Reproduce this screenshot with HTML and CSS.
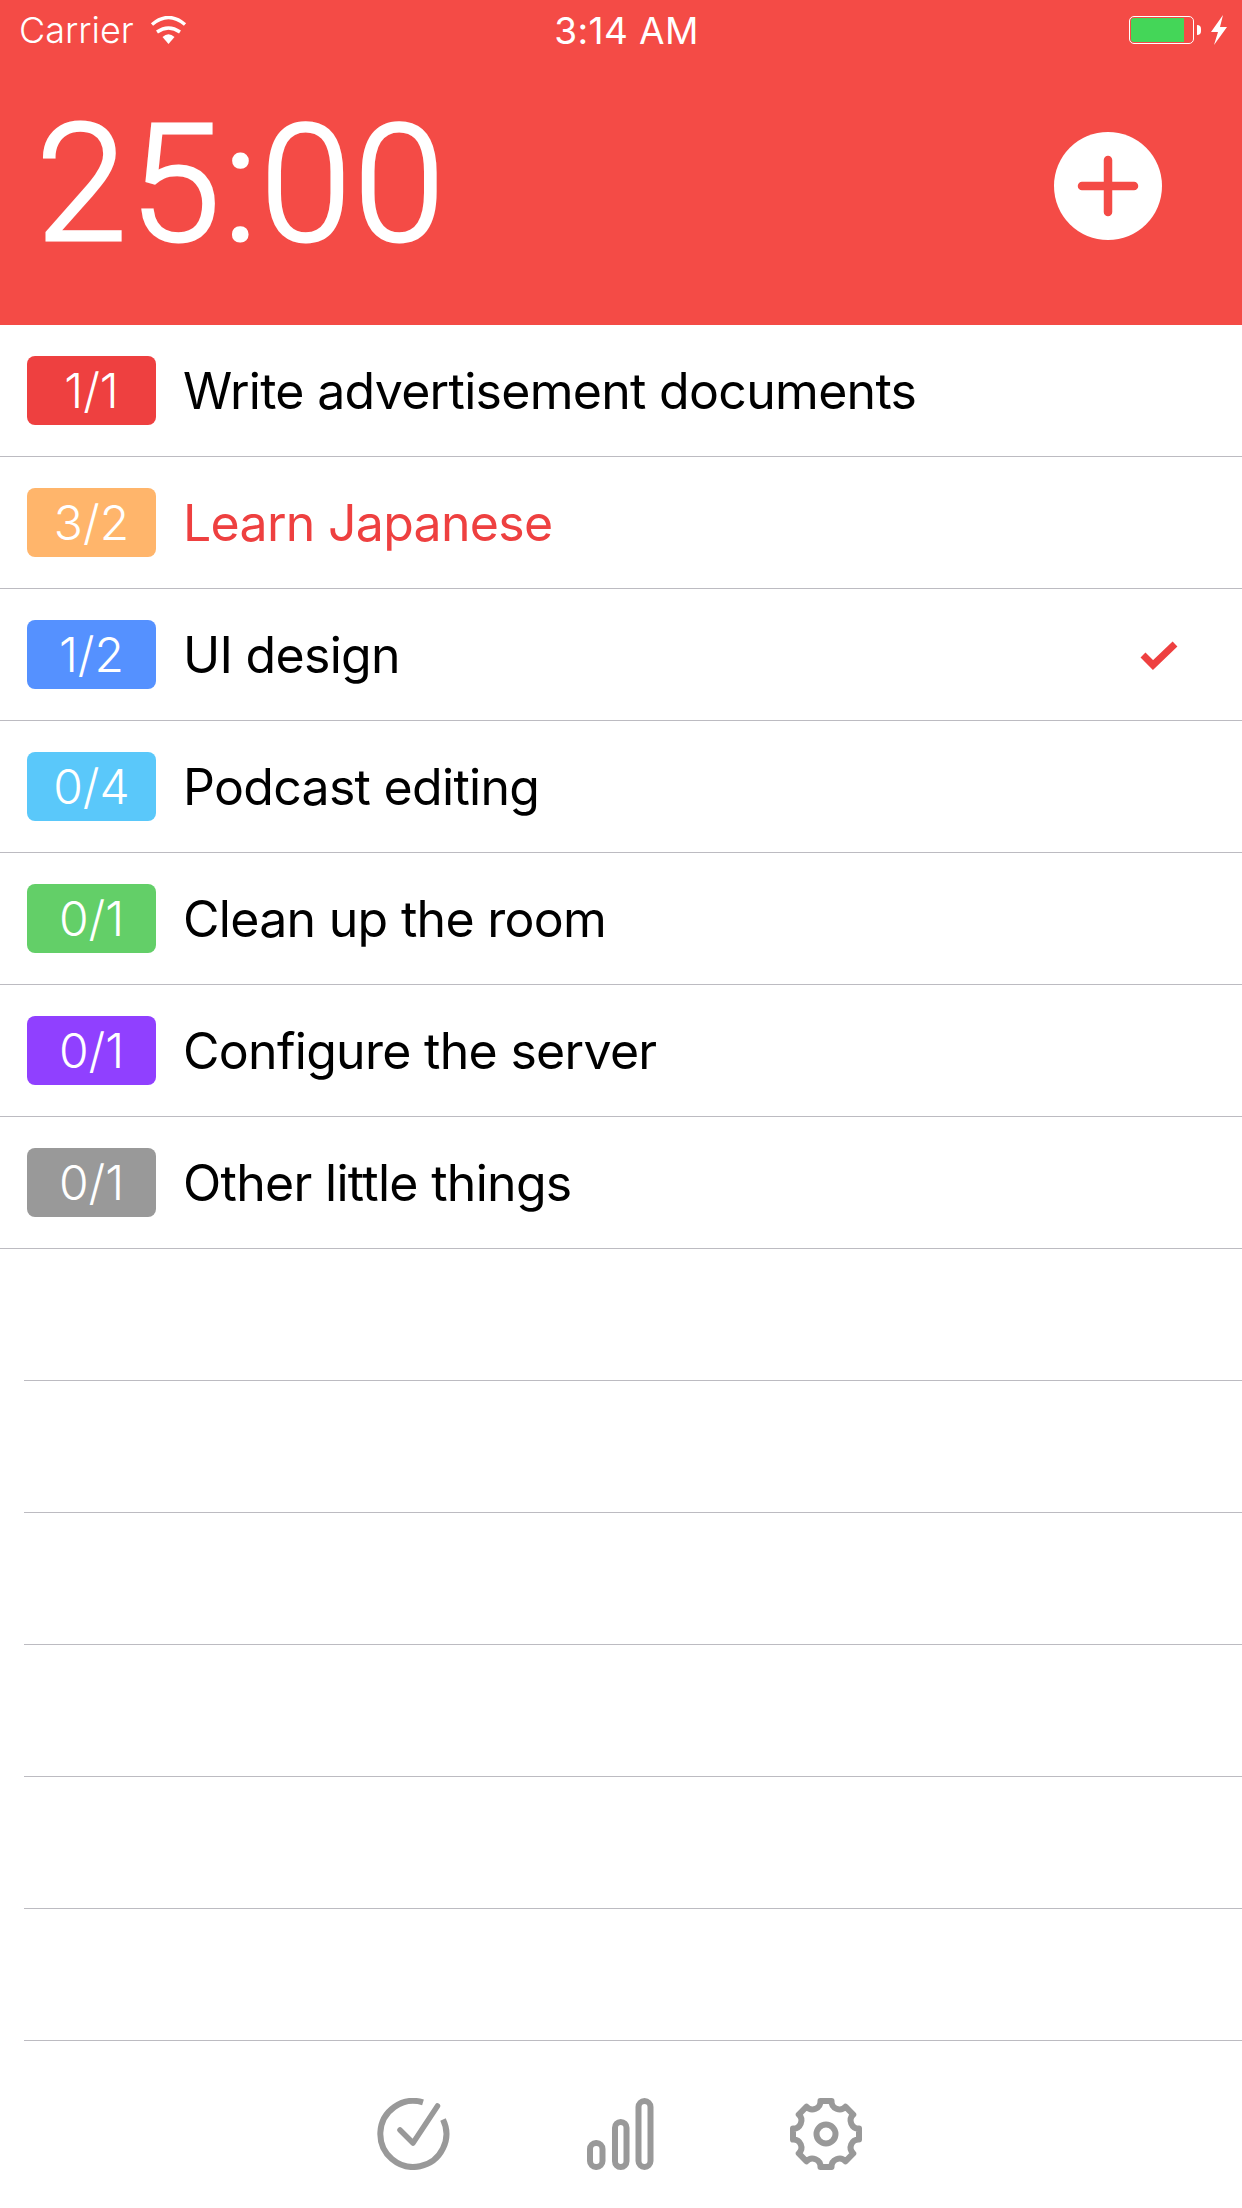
FILE: index.html
```html
<!DOCTYPE html>
<html>
<head>
  <meta charset="UTF-8">
  <title>Pomodoro</title>
  <meta name="viewport" content="width=device-width, initial-scale=1">
  <link rel="stylesheet" href="styles.css">
</head>
<body>
  <div class="app">
    <header class="header">
      <div class="status">
        <div class="status-left">
          <span class="carrier">Carrier</span>
          <svg class="wifi" viewBox="0 0 37 28">
            <path d="M2 8.5 Q18.5 -5.5 35 8.5" />
            <path d="M7 16 Q18.5 8 30 16" />
            <path class="wedge" d="M18.5 28 L12.5 21 Q18.5 15.5 24.5 21 Z" />
          </svg>
        </div>
        <span class="clock">3:14 AM</span>
        <div class="status-right">
          <span class="battery"><span class="charge"></span></span>
          <span class="battery-cap"></span>
          <svg class="bolt" viewBox="0 0 16 30"><path d="M12 0 L0 17 L7 17 L3 30 L16 12 L9 12 Z" /></svg>
        </div>
      </div>
      <div class="timer-row">
        <span class="timer">25:00</span>
        <svg class="add" viewBox="0 0 108 108">
          <circle cx="54" cy="54" r="54" />
          <path d="M54 28 V80 M28 54 H80" />
        </svg>
      </div>
    </header>

    <ul class="list">
      <li class="row">
        <span class="badge red">1/1</span>
        <span class="name">Write advertisement documents</span>
      </li>
      <li class="row">
        <span class="badge orange">3/2</span>
        <span class="name over">Learn Japanese</span>
      </li>
      <li class="row">
        <span class="badge blue">1/2</span>
        <span class="name">UI design</span>
        <svg class="tick" viewBox="0 0 38 30"><path d="M3 15 L13 25 L35 4" /></svg>
      </li>
      <li class="row">
        <span class="badge sky">0/4</span>
        <span class="name">Podcast editing</span>
      </li>
      <li class="row">
        <span class="badge green">0/1</span>
        <span class="name">Clean up the room</span>
      </li>
      <li class="row">
        <span class="badge purple">0/1</span>
        <span class="name">Configure the server</span>
      </li>
      <li class="row">
        <span class="badge gray">0/1</span>
        <span class="name">Other little things</span>
      </li>
      <li class="row empty"></li>
      <li class="row empty"></li>
      <li class="row empty"></li>
      <li class="row empty"></li>
      <li class="row empty"></li>
      <li class="row empty"></li>
    </ul>

    <nav class="tabs">
      <svg class="tab-check" viewBox="0 0 73 72">
        <path d="M46 4.4 A33 33 0 1 0 66 21.5" />
        <path class="round" d="M23 32 L36 45 L60.5 8" />
      </svg>
      <svg class="tab-stats" viewBox="0 0 67 72">
        <rect x="3" y="45" width="12.5" height="24" rx="6" />
        <rect x="28" y="24" width="11.5" height="45" rx="5.7" />
        <rect x="51.5" y="3" width="12" height="66" rx="6" />
      </svg>
      <svg class="tab-gear" viewBox="0 0 72 72">
        <path d="M30.47 3 L41.53 3 A8 8 0 0 0 55.45 8.73 L63.27 16.55 A8 8 0 0 0 69 30.47 L69 41.53 A8 8 0 0 0 63.27 55.45 L55.45 63.27 A8 8 0 0 0 41.53 69 L30.47 69 A8 8 0 0 0 16.55 63.27 L8.73 55.45 A8 8 0 0 0 3 41.53 L3 30.47 A8 8 0 0 0 8.73 16.55 L16.55 8.73 A8 8 0 0 0 30.47 3 Z" />
        <circle cx="36" cy="36" r="9.5" />
      </svg>
    </nav>
  </div>
</body>
</html>
```

FILE: styles.css
```css
* { box-sizing: border-box; }
body { margin: 0; background: white; font-family: Inter, "Liberation Sans", sans-serif; }
.app { width: 1242px; height: 2208px; display: flex; flex-direction: column; overflow: hidden; }

.header { height: 325px; background: #f44b46; color: white; display: flex; flex-direction: column; }
.status { height: 60px; padding: 0 15px 0 19px; display: grid; grid-template-columns: 1fr auto 1fr; align-items: center; font-size: 36px; }
.status-left { display: flex; align-items: center; gap: 16px; }
.carrier { font-weight: 300; }
.clock { margin-left: 7px; font-size: 37px; letter-spacing: 0.4px; }
.status-right { display: flex; align-items: center; justify-content: flex-end; }
.wifi { width: 37px; height: 28px; fill: none; stroke: white; stroke-width: 3.4; }
.wifi .wedge { fill: white; stroke: none; }
.battery { width: 65px; height: 28px; padding: 1px; border: 1px solid white; border-radius: 5px; display: flex; }
.charge { width: 53px; background: #44d658; border-radius: 3px 0 0 3px; }
.battery-cap { width: 4px; height: 10px; margin: 0 10px 0 3px; background: white; border-radius: 0 5px 5px 0; }
.bolt { width: 16px; height: 30px; fill: white; }

.timer-row { flex: 1; padding: 0 80px 14px 36px; display: flex; align-items: center; justify-content: space-between; }
.timer { margin-bottom: 4px; font-family: Roboto, sans-serif; font-weight: 300; font-size: 164px; letter-spacing: 2.6px; line-height: 1; -webkit-text-stroke: 3px white; }
.add { width: 108px; height: 108px; }
.add circle { fill: white; }
.add path { fill: none; stroke: #f44b46; stroke-width: 8.5; stroke-linecap: round; }

.list { flex: 1; margin: 0; padding: 0; list-style: none; }
.row { height: 132px; padding: 0 64px 0 27px; display: flex; align-items: center; gap: 27px; border-bottom: 1px solid #bcbbc1; font-size: 50px; letter-spacing: -0.7px; color: black; }
.row.empty { margin-left: 24px; }
.badge { width: 129px; height: 69px; border-radius: 8px; display: flex; align-items: center; justify-content: center; font-size: 48px; font-weight: 300; letter-spacing: 0; color: white; }
.name { flex: 1; }
.name.over { color: #ee4040; }
.tick { width: 38px; height: 30px; fill: none; stroke: #ee4040; stroke-width: 7; }

.red { background: #ee4040; }
.orange { background: #ffb56b; }
.blue { background: #5591ff; }
.sky { background: #5ac8fa; }
.green { background: #63cf68; }
.purple { background: #9040ff; }
.gray { background: #999999; }

.tabs { height: 167px; padding: 57px 0 0 377px; display: flex; align-items: flex-start; gap: 136.5px; }
.tabs svg { height: 72px; fill: none; stroke: #999999; stroke-width: 6; }
.tab-check { width: 73px; }
.tab-check .round { stroke-width: 5.5; stroke-linecap: round; stroke-linejoin: round; }
.tab-stats { width: 67px; }
.tab-gear { width: 72px; stroke-linejoin: round; }
```
